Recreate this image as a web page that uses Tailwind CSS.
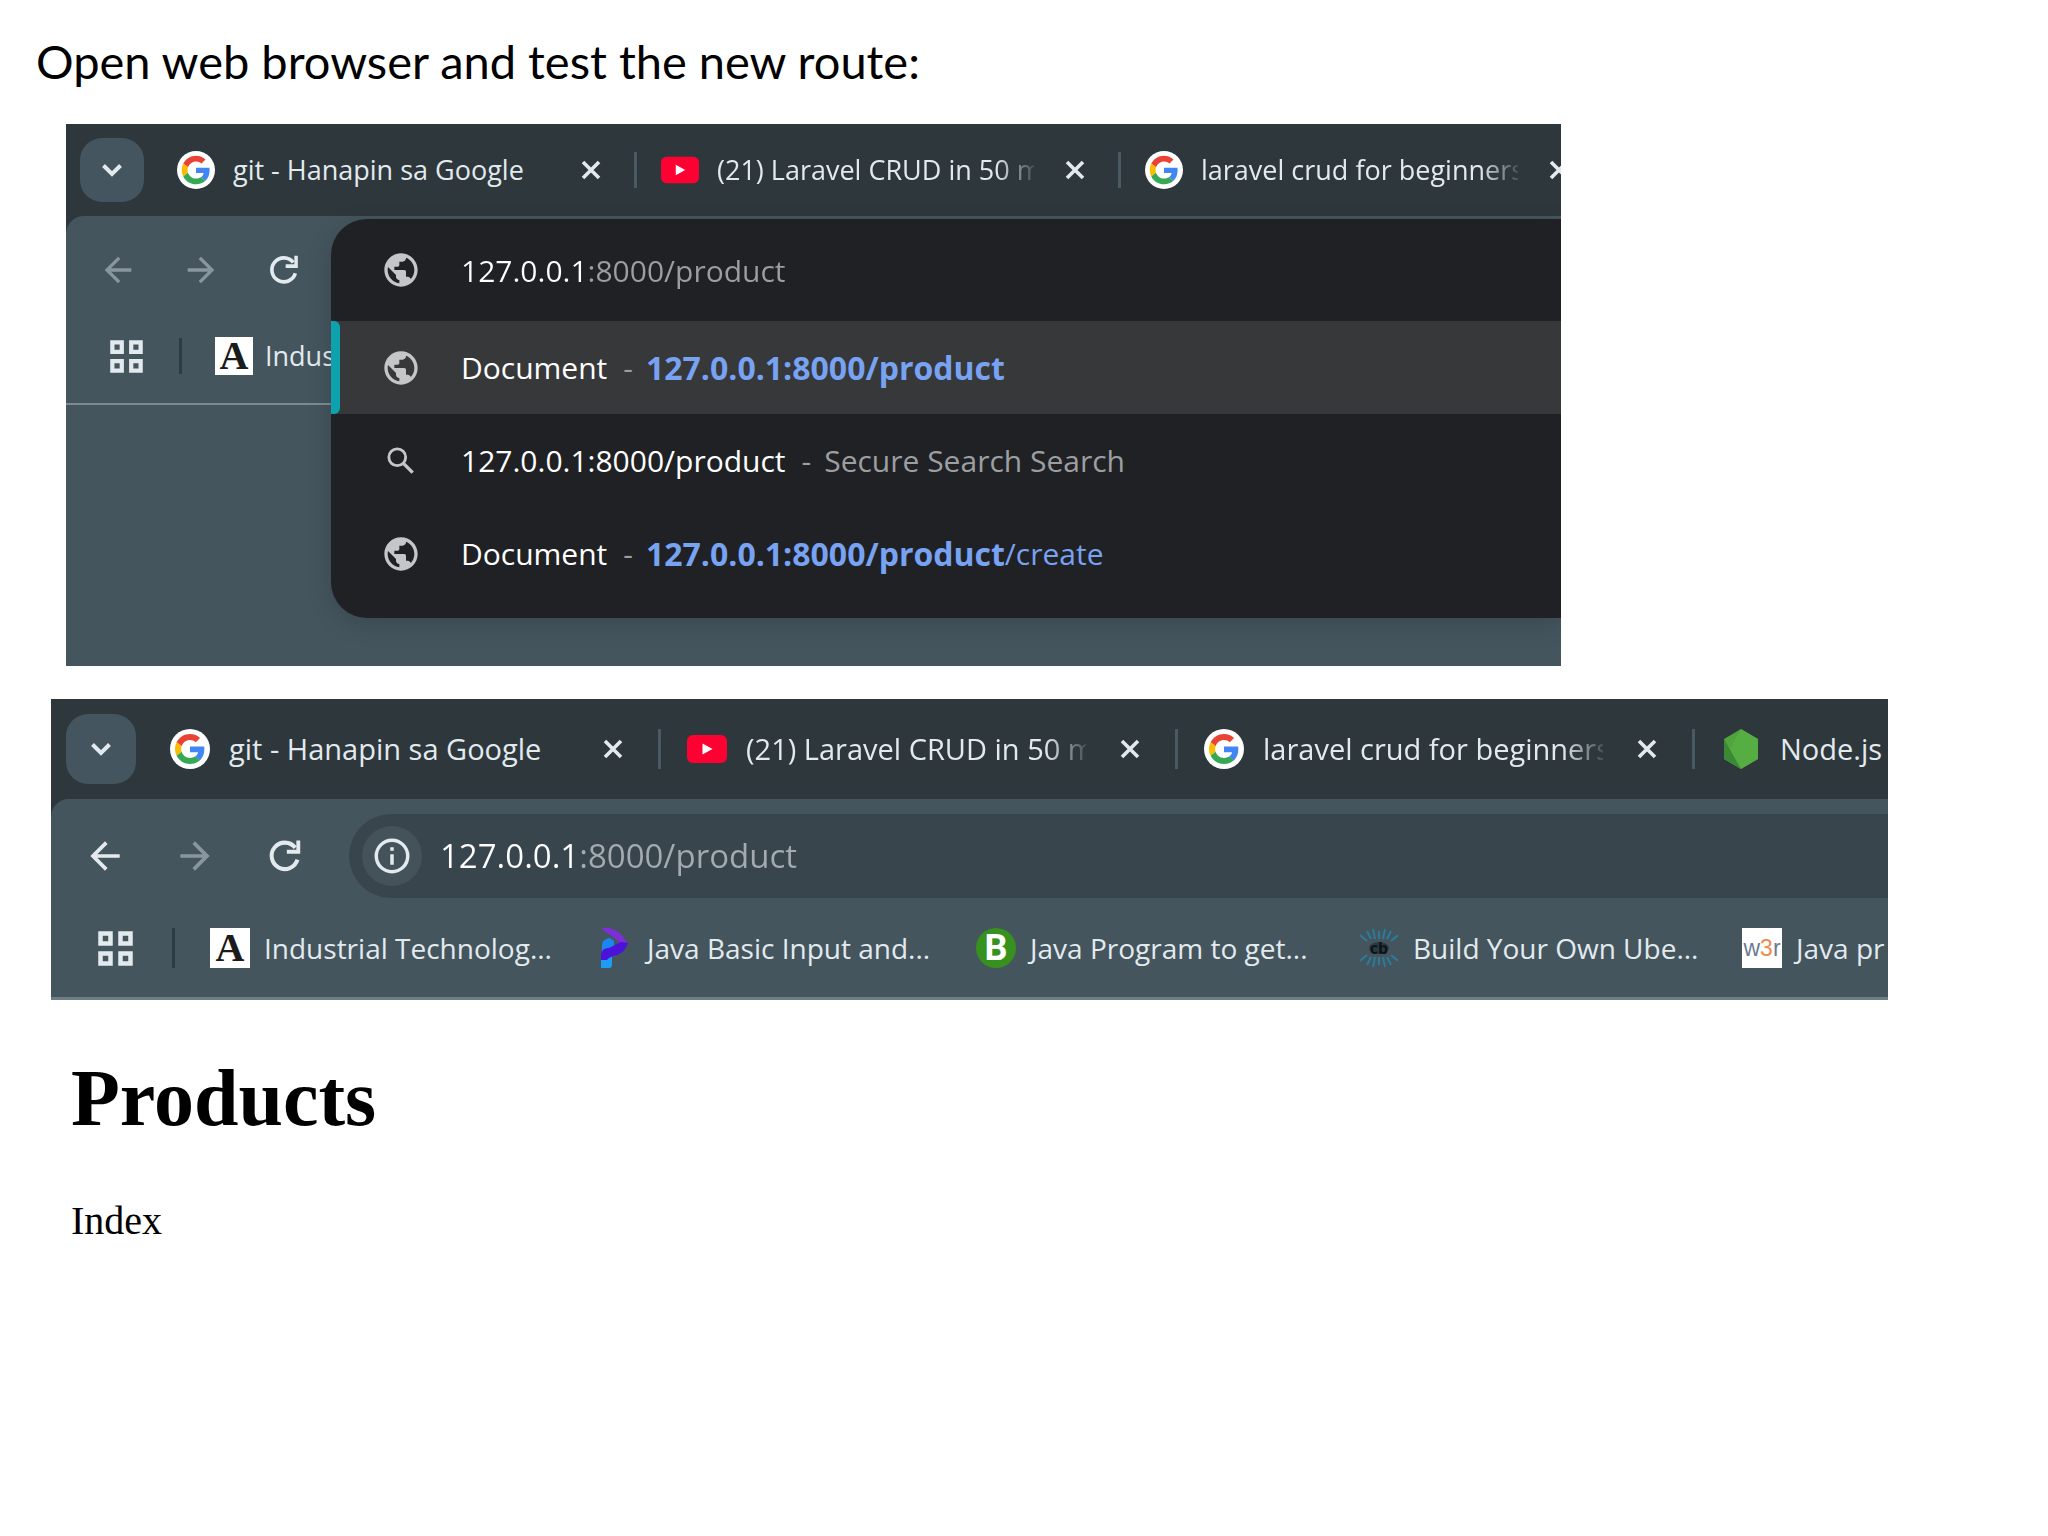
<!DOCTYPE html>
<html lang="en">
<head>
  <meta charset="UTF-8" />
  <meta name="viewport" content="width=device-width, initial-scale=1.0" />
  <title>Testing the product route</title>
  <script src="https://cdn.jsdelivr.net/npm/@tailwindcss/browser@4"></script>
</head>
<body class="bg-white text-black min-h-screen overflow-x-hidden font-['Open_Sans','Noto_Sans',sans-serif]">

  <!-- shared icons -->
  <svg class="hidden" aria-hidden="true">
    <symbol id="google" viewBox="0 0 40 40">
      <circle cx="20" cy="20" r="20" fill="#fff" />
      <g transform="translate(5 5) scale(.625)">
        <path fill="#EA4335" d="M24 9.5c3.54 0 6.71 1.22 9.21 3.6l6.85-6.85C35.9 2.38 30.47 0 24 0 14.62 0 6.51 5.38 2.56 13.22l7.98 6.19C12.43 13.72 17.74 9.5 24 9.5z" />
        <path fill="#4285F4" d="M46.98 24.55c0-1.57-.15-3.09-.38-4.55H24v9.02h12.94c-.58 2.96-2.26 5.48-4.78 7.18l7.73 6c4.51-4.18 7.09-10.36 7.09-17.65z" />
        <path fill="#FBBC05" d="M10.53 28.59c-.48-1.45-.76-2.99-.76-4.59s.27-3.14.76-4.59l-7.98-6.19C.92 16.46 0 20.12 0 24c0 3.88.92 7.54 2.56 10.78l7.97-6.19z" />
        <path fill="#34A853" d="M24 48c6.48 0 11.93-2.13 15.89-5.81l-7.73-6c-2.15 1.45-4.92 2.3-8.16 2.3-6.26 0-11.57-4.22-13.47-9.91l-7.98 6.19C6.51 42.62 14.62 48 24 48z" />
      </g>
    </symbol>
    <symbol id="youtube" viewBox="0 0 40 40">
      <rect x="0" y="6" width="40" height="28" rx="6" fill="#ff0033" />
      <path d="M15.500 14.500v11l10-5.500z" fill="#fff" />
    </symbol>
    <symbol id="node" viewBox="0 0 40 40">
      <path d="M20 0l17 10v20L20 40 3 30V10z" fill="#4fa53c" />
      <path d="M3 10l17 30L3 30z" fill="#3a8a35" />
      <path d="M20 0l17 10v20L20 40 9 20z" fill="#5cb446" opacity=".6" />
    </symbol>
    <symbol id="chevron" viewBox="0 0 24 24">
      <path d="M3.500 7.500L12 16l8.500-8.500" fill="none" stroke="currentColor" stroke-width="4" />
    </symbol>
    <symbol id="close" viewBox="0 0 20 20">
      <path d="M2 2l16 16M18 2L2 18" fill="none" stroke="currentColor" stroke-width="3.600" />
    </symbol>
    <symbol id="back" viewBox="0 0 24 24">
      <path d="M20 11H7.830l5.590-5.590L12 4l-8 8 8 8 1.410-1.410L7.830 13H20v-2z" fill="currentColor" />
    </symbol>
    <symbol id="forward" viewBox="0 0 24 24">
      <path d="M12 4l-1.410 1.410L16.170 11H4v2h12.170l-5.580 5.590L12 20l8-8z" fill="currentColor" />
    </symbol>
    <symbol id="reload" viewBox="0 0 24 24">
      <path d="M18.800 14A7.200 7.200 0 1 1 17.600 7.500" fill="none" stroke="currentColor" stroke-width="2.200" />
      <path d="M18.200 3.500h2.100v7.300H13V8.600h5.200z" fill="currentColor" />
    </symbol>
    <symbol id="apps" viewBox="0 0 35 35">
      <path d="M2.500 2.500h10v10h-10zM22.500 2.500h10v10h-10zM2.500 22.500h10v10h-10zM22.500 22.500h10v10h-10z" fill="none" stroke="currentColor" stroke-width="4.500" />
    </symbol>
    <symbol id="globe" viewBox="0 0 24 24">
      <path d="M12 2C6.480 2 2 6.480 2 12s4.480 10 10 10 10-4.480 10-10S17.520 2 12 2zm-1 17.930c-3.950-.49-7-3.850-7-7.930 0-.62.08-1.210.21-1.790L9 15v1c0 1.100.9 2 2 2v1.930zm6.900-2.540c-.26-.81-1-1.390-1.900-1.390h-1v-3c0-.55-.45-1-1-1H8v-2h2c.55 0 1-.45 1-1V7h2c1.100 0 2-.9 2-2v-.41c2.930 1.190 5 4.060 5 7.410 0 2.080-.8 3.970-2.100 5.390z" fill="currentColor" />
    </symbol>
    <symbol id="search" viewBox="0 0 24 24">
      <circle cx="9.500" cy="9.500" r="5.600" fill="none" stroke="currentColor" stroke-width="1.900" />
      <path d="M13.800 13.800l6 6" stroke="currentColor" stroke-width="2.200" />
    </symbol>
    <symbol id="info" viewBox="0 0 24 24">
      <circle cx="12" cy="12" r="9" fill="none" stroke="currentColor" stroke-width="2" />
      <path d="M11 11h2v6h-2zM11 7h2v2h-2z" fill="currentColor" />
    </symbol>
    <symbol id="programiz" viewBox="0 0 40 40">
      <path d="M9 24V16q1-5 8-6l4 3v6z" fill="#1a86ee" />
      <path d="M8 28h11v9q0 3-3 3H8z" fill="#1f9cf5" />
      <path d="M8 0h8q12 2 18 15l-5 4q-5-9-14-13z" fill="#7d2fd6" />
      <path d="M8 28q0-8 8-8l12-6 7 1q-3 9-11 12-8 2-10 5H8z" fill="#4b12dc" />
    </symbol>
    <symbol id="rays" viewBox="0 0 40 40">
      <path d="M20 3v8M14 1l2 10M26 1l-2 10M8 3l4 8M32 3l-4 8M1 7l7 6M39 7l-7 6M20 29v8M14 39l2-10M26 39l-2-10M8 37l4-8M32 37l-4-8M1 33l7-6M39 33l-7-6" stroke="#2a7b9c" stroke-width="2" fill="none" />
      <ellipse cx="20" cy="20" rx="10" ry="6" fill="#2b3a42" />
    </symbol>
  </svg>

  <p class="pt-[31px] pb-[33px] pl-9 text-[47px] leading-[60px] font-['Lato',sans-serif]">Open web browser and test the new route:</p>

  <!-- typing the address -->
  <section class="relative ml-[66px] mr-[487px] overflow-hidden bg-[#2d373c] text-[27px] text-[#e3eaee]">
    <div class="flex h-[92px] items-center pl-[14px]">
      <button aria-label="Search tabs" class="mr-[9px] flex size-16 shrink-0 items-center justify-center rounded-[22px] bg-[#44555f]"><svg class="size-6"><use href="#chevron" /></svg></button>
      <div class="flex w-[484px] shrink-0 items-center pl-6">
        <svg class="size-[38px] shrink-0"><use href="#google" /></svg>
        <button class="ml-[18px] flex-1 overflow-hidden text-left whitespace-nowrap">git - Hanapin sa Google</button>
        <button aria-label="Close tab" class="mr-[33px] ml-[31px]"><svg class="size-5"><use href="#close" /></svg></button>
        <span class="h-9 w-[3px] bg-[#4a5a63]"></span>
      </div>
      <div class="flex w-[484px] shrink-0 items-center pl-6">
        <svg class="size-[38px] shrink-0"><use href="#youtube" /></svg>
        <button class="ml-[18px] flex-1 overflow-hidden text-left whitespace-nowrap [mask-image:linear-gradient(to_right,#000_88%,transparent_102%)]">(21) Laravel CRUD in 50 m</button>
        <button aria-label="Close tab" class="mr-[33px] ml-[31px]"><svg class="size-5"><use href="#close" /></svg></button>
        <span class="h-9 w-[3px] bg-[#4a5a63]"></span>
      </div>
      <div class="flex w-[484px] shrink-0 items-center pl-6">
        <svg class="size-[38px] shrink-0"><use href="#google" /></svg>
        <button class="ml-[18px] flex-1 overflow-hidden text-left whitespace-nowrap [mask-image:linear-gradient(to_right,#000_88%,transparent_102%)]">laravel crud for beginners</button>
        <button aria-label="Close tab" class="mr-[33px] ml-[31px]"><svg class="size-5"><use href="#close" /></svg></button>
        <span class="h-9 w-[3px] bg-[#4a5a63]"></span>
      </div>
    </div>

    <div class="rounded-tl-[18px] bg-[#44555e]">
      <div class="flex h-[108px] items-center gap-[43px] pl-8">
        <button aria-label="Back" class="text-[#89969d]"><svg class="size-10"><use href="#back" /></svg></button>
        <button aria-label="Forward" class="text-[#89969d]"><svg class="size-10"><use href="#forward" /></svg></button>
        <button aria-label="Reload"><svg class="size-10"><use href="#reload" /></svg></button>
      </div>
      <div class="flex h-[81px] items-center border-b-2 border-[#7b8a93] pb-[15px] pl-11">
        <button aria-label="Apps"><svg class="size-[33px]"><use href="#apps" /></svg></button>
        <span class="mr-[33px] ml-9 h-9 w-[3px] bg-[#2d3b43]"></span>
        <a href="#" class="flex w-[117px] items-center gap-3 overflow-hidden whitespace-nowrap">
          <span class="flex size-[38px] shrink-0 items-center justify-center bg-white text-[40px] leading-[38px] font-bold text-[#1b1b1b] font-['Liberation_Serif',serif]">A</span>
          Indus
        </a>
      </div>
      <div class="h-[261px]"></div>
    </div>

    <!-- suggestion popup, open over the toolbar -->
    <div class="absolute top-[95px] right-0 left-[265px] overflow-hidden rounded-l-[36px] bg-[#202124] pb-[18px] text-[30px] text-[#9c9fa1] shadow-[0_6px_24px_rgba(0,0,0,0.15)]">
      <div class="flex h-[102px] items-center gap-10 pl-[50px]">
        <svg class="size-10 shrink-0 text-[#c4c6c8]"><use href="#globe" /></svg>
        <input type="text" aria-label="Address" value="127.0.0.1:8000/product" class="min-w-0 flex-1 bg-[linear-gradient(to_right,#ffffff_127px,#9c9fa1_127px)] bg-clip-text text-transparent outline-none" />
      </div>
      <ul>
        <li>
          <a href="#" class="relative flex h-[93px] items-center bg-[#373839] pl-[50px] whitespace-pre">
            <span class="absolute inset-y-0 left-0 w-[9px] rounded-r-md bg-[#0ea1ae]"></span>
            <svg class="mr-10 size-10 shrink-0 text-[#c4c6c8]"><use href="#globe" /></svg>
            <span class="text-white">Document</span><span class="mr-[13px] ml-4">-</span><b class="text-[32px] text-[#78a2f2]">127.0.0.1:8000/product</b>
          </a>
        </li>
        <li>
          <a href="#" class="flex h-[93px] items-center pl-[50px] whitespace-pre">
            <span class="mr-10 flex size-10 shrink-0 items-center justify-center text-[#c4c6c8]"><svg class="size-9"><use href="#search" /></svg></span>
            <span class="text-white">127.0.0.1:8000/product</span><span class="mr-[13px] ml-4">-</span><span>Secure Search Search</span>
          </a>
        </li>
        <li>
          <a href="#" class="flex h-[93px] items-center pl-[50px] whitespace-pre">
            <svg class="mr-10 size-10 shrink-0 text-[#c4c6c8]"><use href="#globe" /></svg>
            <span class="text-white">Document</span><span class="mr-[13px] ml-4">-</span><b class="text-[32px] text-[#78a2f2]">127.0.0.1:8000/product</b><span class="text-[#78a2f2]">/create</span>
          </a>
        </li>
      </ul>
    </div>
  </section>

  <!-- the page once loaded -->
  <section class="mt-[33px] mr-[160px] ml-[51px] overflow-hidden bg-[#2d373c] text-[29px] text-[#e3eaee]">
    <div class="flex h-[100px] items-center pl-[15px]">
      <button aria-label="Search tabs" class="mr-2 flex size-[70px] shrink-0 items-center justify-center rounded-[22px] bg-[#44555f]"><svg class="size-6"><use href="#chevron" /></svg></button>
      <div class="flex w-[517px] shrink-0 items-center pl-[26px]">
        <svg class="size-10 shrink-0"><use href="#google" /></svg>
        <button class="ml-[19px] flex-1 overflow-hidden text-left whitespace-nowrap">git - Hanapin sa Google</button>
        <button aria-label="Close tab" class="mr-[35px] ml-[34px]"><svg class="size-5"><use href="#close" /></svg></button>
        <span class="h-10 w-[3px] bg-[#4a5a63]"></span>
      </div>
      <div class="flex w-[517px] shrink-0 items-center pl-[26px]">
        <svg class="size-10 shrink-0"><use href="#youtube" /></svg>
        <button class="ml-[19px] flex-1 overflow-hidden text-left whitespace-nowrap [mask-image:linear-gradient(to_right,#000_88%,transparent_102%)]">(21) Laravel CRUD in 50 m</button>
        <button aria-label="Close tab" class="mr-[35px] ml-[34px]"><svg class="size-5"><use href="#close" /></svg></button>
        <span class="h-10 w-[3px] bg-[#4a5a63]"></span>
      </div>
      <div class="flex w-[517px] shrink-0 items-center pl-[26px]">
        <svg class="size-10 shrink-0"><use href="#google" /></svg>
        <button class="ml-[19px] flex-1 overflow-hidden text-left whitespace-nowrap [mask-image:linear-gradient(to_right,#000_88%,transparent_102%)]">laravel crud for beginners</button>
        <button aria-label="Close tab" class="mr-[35px] ml-[34px]"><svg class="size-5"><use href="#close" /></svg></button>
        <span class="h-10 w-[3px] bg-[#4a5a63]"></span>
      </div>
      <div class="flex w-[517px] shrink-0 items-center pl-[26px]">
        <svg class="size-10 shrink-0"><use href="#node" /></svg>
        <button class="ml-[19px] flex-1 overflow-hidden text-left whitespace-nowrap">Node.js -</button>
      </div>
    </div>

    <div class="rounded-tl-[18px] border-b-3 border-[#6f7d85] bg-[#44555e] pb-[14px]">
      <div class="flex h-[114px] items-center pl-8">
        <button aria-label="Back" class="mr-[46px]"><svg class="size-11"><use href="#back" /></svg></button>
        <button aria-label="Forward" class="mr-[46px] text-[#89969d]"><svg class="size-11"><use href="#forward" /></svg></button>
        <button aria-label="Reload" class="mr-[42px]"><svg class="size-11"><use href="#reload" /></svg></button>
        <div class="flex h-[84px] flex-1 items-center gap-[18px] rounded-l-full bg-[#39454d] pl-[13px]">
          <button aria-label="Site information" class="flex size-[60px] shrink-0 items-center justify-center rounded-full bg-[#44525a]"><svg class="size-[42px]"><use href="#info" /></svg></button>
          <input type="text" aria-label="Address" value="127.0.0.1:8000/product" class="min-w-0 flex-1 bg-[linear-gradient(to_right,#ffffff_140px,#a4abb0_140px)] bg-clip-text text-[33px] text-transparent outline-none" />
        </div>
      </div>
      <div class="flex h-[70px] items-center pl-[47px] text-[28px]">
        <button aria-label="Apps" class="shrink-0"><svg class="size-[35px]"><use href="#apps" /></svg></button>
        <span class="mr-[35px] ml-[39px] h-10 w-[3px] shrink-0 bg-[#2d3b43]"></span>
        <a href="#" class="flex w-[383px] shrink-0 items-center gap-[14px] whitespace-nowrap">
          <span class="flex size-10 items-center justify-center bg-white text-[40px] leading-10 font-bold text-[#1b1b1b] font-['Liberation_Serif',serif]">A</span>
          Industrial Technolog...
        </a>
        <a href="#" class="flex w-[383px] shrink-0 items-center gap-[14px] whitespace-nowrap">
          <svg class="size-10"><use href="#programiz" /></svg>
          Java Basic Input and...
        </a>
        <a href="#" class="flex w-[383px] shrink-0 items-center gap-[14px] whitespace-nowrap">
          <span class="flex size-10 items-center justify-center rounded-full bg-[#37911f] text-[36px] leading-10 font-bold text-white font-['Roboto',sans-serif]">B</span>
          Java Program to get...
        </a>
        <a href="#" class="flex w-[383px] shrink-0 items-center gap-[14px] whitespace-nowrap">
          <span class="relative flex size-10 items-center justify-center">
            <svg class="absolute inset-0 size-10"><use href="#rays" /></svg>
            <span class="relative text-[16px] leading-5 font-bold text-[#0d1316]">cb</span>
          </span>
          Build Your Own Ube...
        </a>
        <a href="#" class="flex w-[383px] shrink-0 items-center gap-[14px] whitespace-nowrap">
          <span class="flex size-10 items-center justify-center bg-white text-[23px] text-[#6c7a90] font-['Liberation_Sans',sans-serif]">w<span class="text-[#f08a4b]">3</span>r</span>
          Java pr
        </a>
      </div>
    </div>
  </section>

  <main class="pl-[71px] font-['Liberation_Serif',serif]">
    <h1 class="mt-[53px] text-[80px] leading-[90px] font-bold">Products</h1>
    <p class="mt-14 text-[40px] leading-[44px]">Index</p>
  </main>

</body>
</html>
